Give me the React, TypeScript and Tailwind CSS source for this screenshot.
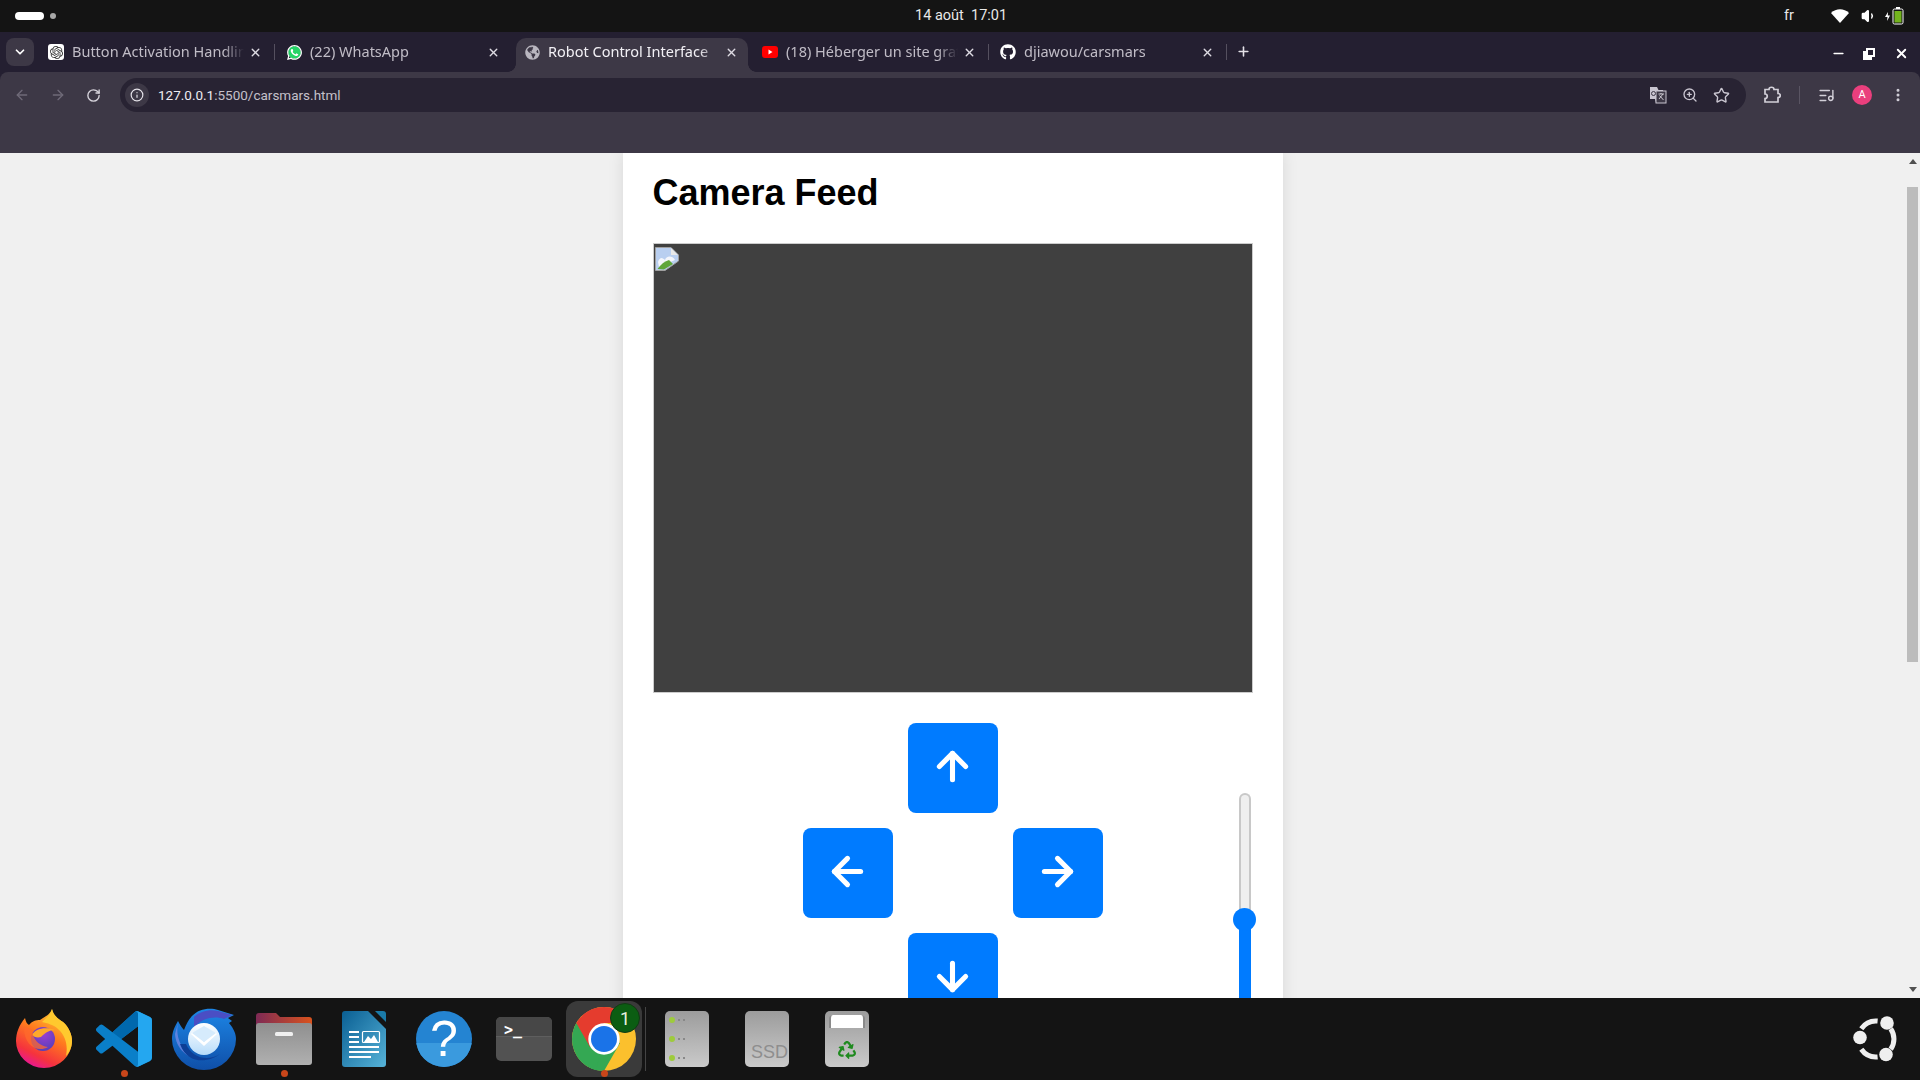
import { ReactNode } from "react";
import {
  ArrowDown, ArrowLeft, ArrowRight, ArrowUp, ChevronDown, EllipsisVertical, Info, ListMusic,
  Minus, Plus, RotateCw, Star, Volume1, X, ZoomIn,
} from "lucide-react";
import { FaGithub, FaGlobeAmericas, FaRecycle, FaWhatsapp } from "react-icons/fa";
import { SiOpenai } from "react-icons/si";

function Tab({ title, icon, active, sep }: { title: string; icon: ReactNode; active?: boolean; sep?: boolean }) {
  return (
    <div className={`relative flex h-[34px] w-[238px] shrink-0 items-start pl-[11px] pt-[6px] ${active ? "text-[#f2f0f5]" : "text-[#c0bcc6]"}`}>
      {active && (
        <>
          <div className="absolute inset-y-0 left-[3px] right-[3px] rounded-t-[10px] bg-[#3d3846]" />
          <div className="absolute bottom-0 left-[-5px] h-2 w-2 bg-[radial-gradient(circle_at_0_0,#241f31_7.5px,#3d3846_8px)]" />
          <div className="absolute bottom-0 right-[-5px] h-2 w-2 bg-[radial-gradient(circle_at_100%_0,#241f31_7.5px,#3d3846_8px)]" />
        </>
      )}
      {sep && <div className="absolute right-0 top-[6px] h-4 w-px bg-[#55505f]" />}
      <div className="relative flex h-4 w-4 shrink-0 items-center justify-center">{icon}</div>
      <span className="relative ml-[8px] mt-[-3px] w-[172px] overflow-hidden whitespace-nowrap font-['Noto_Sans',sans-serif] text-[14.5px] leading-5 [mask-image:linear-gradient(to_right,black_88%,transparent)]">
        {title}
      </span>
      <X className="absolute right-[13px] top-[8px] text-[#dedbe3]" size={13} strokeWidth={2.6} />
    </div>
  );
}

function Firefox() {
  return (
    <svg viewBox="0 0 56 60" className="h-[60px] w-14 -translate-y-px">
      <defs>
        <linearGradient id="ffBody" x1="0.8" y1="0" x2="0.3" y2="1">
          <stop offset="0" stopColor="#ffd43a" />
          <stop offset="0.45" stopColor="#ff7a1e" />
          <stop offset="0.8" stopColor="#f5333d" />
          <stop offset="1" stopColor="#e8159a" />
        </linearGradient>
        <radialGradient id="ffCore" cx="0.55" cy="0.3" r="0.8">
          <stop offset="0" stopColor="#9a3fd0" />
          <stop offset="1" stopColor="#4c3fb5" />
        </radialGradient>
      </defs>
      <path d="M36 1C37 7 42 11 47 14C53 19 56 27 56 33A28 27 0 0 1 0 33C0 25 3 17 9 10C10 14 11 16 13 17C16 13 20 12 24 12C28 9 34 7 36 1Z" fill="url(#ffBody)" />
      <path d="M36 1C37 7 42 11 47 14C53 19 56 27 56 33C56 38 54 44 50 48C52 38 50 28 42 21C38 17 31 15 26 14C30 10 35 7 36 1Z" fill="#ffc92e" />
      <circle cx="27" cy="31" r="12" fill="url(#ffCore)" />
      <path d="M16 27C19 21 29 18 39 22C33 22 29 25 25 29C21 30 18 29 16 27Z" fill="#ffa82a" />
      <path d="M8 20C14 19 17 22 17 27C19 33 24 38 32 39C22 45 8 38 8 20Z" fill="#ff6a2c" opacity="0.75" />
    </svg>
  );
}

function VsCode() {
  return (
    <svg viewBox="0 0 100 100" className="h-14 w-14">
      <path d="M75 72.7 45.2 50 75 27.3ZM96.4 10.8 75.8.9a6.2 6.2 0 0 0-7.1 1.2L29.4 38 12.2 25a4.2 4.2 0 0 0-5.3.2L1.4 30.2a4.2 4.2 0 0 0 0 6.2L16.3 50 1.4 63.6a4.2 4.2 0 0 0 0 6.2l5.5 5a4.2 4.2 0 0 0 5.3.2l17.2-13 39.3 35.9a6.2 6.2 0 0 0 7.1 1.2l20.6-9.9a6.2 6.2 0 0 0 3.5-5.6V16.4a6.2 6.2 0 0 0-3.5-5.6Z" fill="#0a7fc9" fillRule="evenodd" />
      <path d="M68.7 2.1 29.4 38 45.2 50 75 27.3V3C75 1 71 0 68.7 2.1Z" fill="#0068ad" />
      <path d="M71 .3 75.8.9l20.6 9.9a6.2 6.2 0 0 1 3.5 5.6v67.2a6.2 6.2 0 0 1-3.5 5.6L75.8 99.1 71 99.7C74 99 75 97 75 95V5C75 3 74 1 71 .3Z" fill="#24a7f0" />
    </svg>
  );
}

function Thunderbird() {
  return (
    <svg viewBox="0 0 64 62" className="h-[62px] w-16">
      <defs>
        <linearGradient id="tbBody" x1="0.5" y1="0" x2="0.5" y2="1">
          <stop offset="0" stopColor="#1d86e6" />
          <stop offset="1" stopColor="#0f4fa8" />
        </linearGradient>
        <linearGradient id="tbBall" x1="0.5" y1="0" x2="0.5" y2="1">
          <stop offset="0" stopColor="#ffffff" />
          <stop offset="1" stopColor="#b7dcfa" />
        </linearGradient>
      </defs>
      <path d="M20 8C26 1 38-1 46 2L62 7 56 10 60 13 57 15C62 21 64 26 64 31A32 31 0 0 1 0 31C0 24 3 18 6 13 8 17 10 20 12 22 14 17 16 12 20 8Z" fill="url(#tbBody)" />
      <path d="M22 9C28 3 38 1 46 3L60 7 52 11C44 8 30 9 22 20Z" fill="#4a4ec4" />
      <path d="M6 15C3 30 10 46 28 50 18 52 4 42 3 26Z" fill="#7c8ce8" opacity="0.7" />
      <circle cx="32" cy="31" r="16" fill="url(#tbBall)" />
      <path d="M20 25 32 36 44 25" fill="none" stroke="#ffffff" strokeWidth="3" />
      <path d="M20 25 32 34 44 25 32 18Z" fill="#d6ebfc" />
      <path d="M14 36C20 50 36 54 48 46 38 54 16 58 8 36Z" fill="#0d3f96" />
    </svg>
  );
}

function FilesIcon() {
  return (
    <svg viewBox="0 0 56 52" className="h-[52px] w-14">
      <defs>
        <linearGradient id="fBack" x1="0" y1="0" x2="1" y2="0">
          <stop offset="0" stopColor="#7e2a55" />
          <stop offset="1" stopColor="#d9531e" />
        </linearGradient>
        <linearGradient id="fFront" x1="0" y1="0" x2="0" y2="1">
          <stop offset="0" stopColor="#8f8f8f" />
          <stop offset="1" stopColor="#b0b0b0" />
        </linearGradient>
      </defs>
      <path d="M3 0H20L24 4H53A3 3 0 0 1 56 7V20H0V3A3 3 0 0 1 3 0Z" fill="url(#fBack)" />
      <rect y="10" width="56" height="42" rx="3" fill="url(#fFront)" />
      <rect x="19" y="19" width="18" height="4" rx="1.5" fill="#f0f0f0" />
    </svg>
  );
}

function Writer() {
  return (
    <svg viewBox="0 0 44 56" className="h-14 w-11">
      <defs>
        <linearGradient id="wBody" x1="0" y1="0" x2="1" y2="1">
          <stop offset="0" stopColor="#0a5f93" />
          <stop offset="1" stopColor="#56b3d8" />
        </linearGradient>
      </defs>
      <path d="M3 0H26L44 18V53A3 3 0 0 1 41 56H3A3 3 0 0 1 0 53V3A3 3 0 0 1 3 0Z" fill="url(#wBody)" />
      <path d="M33 0H41A3 3 0 0 1 44 3V11Z" fill="#1a7aa8" />
      <path d="M7 21H17M7 26H17M7 31H17M7 36H37M7 41H37M7 46H29" stroke="#fff" strokeWidth="2" />
      <rect x="20.500" y="20.500" width="17" height="11" rx="1" fill="none" stroke="#fff" strokeWidth="1.2" />
      <path d="M22 31 26 25 29 28 32 24 36 31Z" fill="#fff" />
    </svg>
  );
}

function HelpIcon() {
  return (
    <div className="relative flex h-14 w-14 items-center justify-center overflow-hidden rounded-full bg-[#2484d2]">
      <div className="absolute inset-x-0 bottom-0 h-[24px] bg-[#3a9ade]" />
      <span className="relative font-['Liberation_Sans',sans-serif] text-[50px] leading-none text-white">?</span>
    </div>
  );
}

function TerminalIcon() {
  return (
    <div className="relative h-[44px] w-14 overflow-hidden rounded-[5px] bg-[#525252]">
      <div className="h-[20px] border-b border-[#5e5e5e] bg-[#474747]" />
      <span className="absolute left-[8px] top-[3px] font-['DejaVu_Sans_Mono',monospace] text-[15px] font-bold leading-5 text-white">&gt;_</span>
    </div>
  );
}

function ChromeIcon() {
  return (
    <svg viewBox="0 0 64 64" className="h-16 w-16">
      <circle cx="32" cy="32" r="32" fill="#fbc02d" />
      <path d="M32 32 4.300 48A32 32 0 0 0 32 64L48 36Z" fill="#34a853" />
      <path d="M4.300 16A32 32 0 0 0 4.300 48 32 32 0 0 0 24 62.900L32 32Z" fill="#34a853" />
      <path d="M4.300 16A32 32 0 0 1 59.700 16H32L18 40Z" fill="#e53c2e" />
      <circle cx="32" cy="32" r="15.700" fill="#fff" />
      <circle cx="32" cy="32" r="13" fill="#1a73e8" />
    </svg>
  );
}

function Drive({ children }: { children?: ReactNode }) {
  return (
    <div className="relative h-14 w-11 overflow-hidden rounded-[5px] bg-[linear-gradient(#9c9c9c,#cacaca)]">{children}</div>
  );
}

function DockSlot({ children, dot }: { children: ReactNode; dot?: boolean }) {
  return (
    <div className="relative flex h-full w-20 shrink-0 items-center justify-center">
      {children}
      {dot && <div className="absolute bottom-[3px] left-[37px] h-[7px] w-[7px] rounded-full bg-[#c9461a]" />}
    </div>
  );
}

export default function App() {
  return (
    <div className="flex h-screen w-screen flex-col overflow-hidden bg-[#f0f0f0] font-[Roboto,sans-serif]">
      {/* barre GNOME */}
      <div className="relative flex h-8 shrink-0 items-center bg-[#141414] text-[#e8e8e8]">
        <div className="ml-[15px] h-2 w-[29px] rounded-full bg-white" />
        <div className="ml-[6px] h-[6px] w-[6px] rounded-full bg-[#a8a8a8]" />
        <span className="absolute left-[915px] text-[14.500px] leading-5">14 août&nbsp; 17:01</span>
        <span className="ml-auto text-[14.500px]">fr</span>
        <svg viewBox="0 0 18 14" className="ml-[37px] h-[14px] w-[18px]">
          <path d="M0 4C5-1 13-1 18 4L9 14Z" fill="#fff" />
        </svg>
        <Volume1 className="ml-[12px] fill-white text-white" size={16} />
        <svg viewBox="0 0 20 20" className="ml-[8px] mr-[15px] h-5 w-5">
          <path d="M3 6 0 11H2.500L2 15 5 9.500H2.800Z" fill="#fff" />
          <rect x="8" y="3" width="10" height="15" rx="1.500" fill="none" stroke="#fff" />
          <rect x="11" y="1" width="4" height="2" fill="#fff" />
          <rect x="9.500" y="5" width="7" height="11.500" fill="#73b31d" />
        </svg>
      </div>

      {/* chrome */}
      <div className="shrink-0 bg-[#241f31]">
        <div className="flex h-10 items-end">
          <div className="mb-[6px] ml-[6px] flex h-7 w-7 shrink-0 items-center justify-center rounded-lg bg-[#3d3846]">
            <ChevronDown className="text-white" size={14} strokeWidth={3} />
          </div>
          <div className="ml-[3px] flex">
            <Tab title="Button Activation Handling" sep
              icon={<div className="flex h-4 w-4 items-center justify-center rounded-[3px] bg-white"><SiOpenai className="text-[#333]" size={13} /></div>} />
            <Tab title="(22) WhatsApp"
              icon={<div className="relative h-[17px] w-[17px]"><div className="absolute inset-[2px] rounded-full bg-[#25d366]" /><FaWhatsapp className="relative text-white" size={17} /></div>} />
            <Tab title="Robot Control Interface" active icon={<FaGlobeAmericas className="text-[#b9b6bf]" size={15} />} />
            <Tab title="(18) Héberger un site gratuitement" sep
              icon={<svg viewBox="0 0 16 12" className="h-3 w-4"><rect width="16" height="12" rx="3" fill="#f00" /><path d="M6.500 3.500 10.500 6 6.500 8.500Z" fill="#fff" /></svg>} />
            <Tab title="djiawou/carsmars" sep icon={<FaGithub className="text-white" size={16} />} />
          </div>
          <Plus className="mb-[13px] ml-[9px] text-[#e4e1e8]" size={15} strokeWidth={2.5} />
          <div className="mb-[11px] ml-auto flex items-center text-white">
            <Minus className="mr-[17px]" size={15} strokeWidth={2.5} />
            <svg viewBox="0 0 12 12" className="mr-[19px] h-3 w-3">
              <path d="M3 0H12V9H9V12H0V3H3ZM5 2V7H10V2Z" fill="#fff" fillRule="evenodd" />
            </svg>
            <X className="mr-[11px]" size={15} strokeWidth={3} />
          </div>
        </div>

        <div className="flex h-[81px] items-start rounded-t-lg bg-[#3d3846] pt-[6px]">
          <div className="flex h-[34px] w-[120px] shrink-0 items-center">
            <ArrowLeft className="ml-[14px] text-[#6f6a78]" size={16} />
            <ArrowRight className="ml-[20px] text-[#6f6a78]" size={16} />
            <RotateCw className="ml-[20px] text-[#d6d3db]" size={15} strokeWidth={2.2} />
          </div>
          <div className="flex h-[34px] w-[1626px] shrink-0 items-center rounded-full bg-[#282333] pl-[5px]">
            <div className="flex h-6 w-6 items-center justify-center rounded-full bg-[#3d3846]">
              <Info className="text-[#e6e3ea]" size={14} />
            </div>
            <span className="ml-[9px] text-[13.500px] text-[#c4c0ca]"><span className="text-[#eeecf1]">127.0.0.1</span>:5500/carsmars.html</span>
            <svg viewBox="0 0 18 18" className="ml-auto h-[18px] w-[18px]">
              <path d="M1 1H8L9.500 4H14V17H7L6 13H1Z" fill="#c9c5d0" />
              <rect x="7" y="5" width="10" height="12" fill="#3d3846" stroke="#c9c5d0" />
              <path d="M9.500 8H15M12 7V8M10 13 14 8M10.500 9.500 14.500 14" stroke="#d8d5dd" strokeWidth="0.9" />
              <circle cx="4.500" cy="7.500" r="2" fill="none" stroke="#3d3846" />
            </svg>
            <ZoomIn className="ml-[15px] text-[#c9c5d0]" size={16} />
            <Star className="ml-[15px] mr-[16px] text-[#c9c5d0]" size={17} />
          </div>
          <div className="flex h-[34px] flex-1 items-center">
            <svg viewBox="0 0 18 18" className="ml-[17px] h-[18px] w-[18px]">
              <path d="M6 3.500C6 .5 11 .5 11 3.500H15V7.500C18 7.500 18 11.500 15 11.500V16H2V12.500C5 12.500 5 8 2 8V3.500Z" fill="none" stroke="#d2cfd8" strokeWidth="1.700" />
            </svg>
            <div className="ml-[18px] h-[18px] w-px bg-[#5a5563]" />
            <ListMusic className="ml-[18px] text-[#d2cfd8]" size={17} />
            <div className="ml-[17px] flex h-5 w-5 items-center justify-center rounded-full bg-[#ea3f7d] text-[11px] text-white">A</div>
            <EllipsisVertical className="ml-[18px] text-[#d2cfd8]" size={16} strokeWidth={2.5} />
          </div>
        </div>
      </div>

      {/* page */}
      <div className="flex min-h-0 flex-1 overflow-hidden">
        <div className="flex flex-1 justify-center">
          <div className="h-[1100px] w-[660px] shrink-0 bg-white px-[30px] pt-[19px] shadow-[0_0_15px_rgba(0,0,0,0.1)]">
            <h1 className="font-['Liberation_Sans',sans-serif] text-4xl leading-[41px] font-bold text-black">Camera Feed</h1>
            <div className="mt-[30px] h-[450px] w-[600px] border border-[#ccc] bg-[#404040] pl-px pt-[3px]">
              <svg viewBox="0 0 24 24" className="h-6 w-6">
                <path d="M.5.500H16L23.500 8V14L10 23.500H.5Z" fill="#b9cff0" stroke="#a0a0a0" />
                <path d="M3 15C5 9 8 11 10 13 11 9 17 8 20 13L4 20Z" fill="#f4f6fb" />
                <path d="M2.500 22C6 17 10 14 14 13L18 17 9 22.500Z" fill="#5fa63a" />
                <path d="M16 1V8H23Z" fill="#e8e8e8" />
              </svg>
            </div>
            <div className="mt-[30px] grid grid-cols-[1fr_auto_1fr]">
              <div />
              <div className="grid grid-cols-[90px_90px_90px] grid-rows-[90px_90px_90px] gap-[15px]">
                <button className="col-start-2 flex items-center justify-center rounded-lg bg-[#007bff] pb-1 text-white">
                  <ArrowUp size={45} strokeWidth={2.700} />
                </button>
                <button className="col-start-1 row-start-2 flex items-center justify-center rounded-lg bg-[#007bff] pb-1 text-white">
                  <ArrowLeft size={45} strokeWidth={2.700} />
                </button>
                <button className="col-start-3 row-start-2 flex items-center justify-center rounded-lg bg-[#007bff] pb-1 text-white">
                  <ArrowRight size={45} strokeWidth={2.700} />
                </button>
                <button className="col-start-2 row-start-3 flex items-center justify-center rounded-lg bg-[#007bff] pb-1 text-white">
                  <ArrowDown size={45} strokeWidth={2.700} />
                </button>
              </div>
              {/* slider vertical */}
              <div className="flex justify-end pr-[2px] pt-[70px]">
                <div className="relative w-3">
                  <div className="h-[130px] rounded-t-full border-2 border-b-0 border-[#c8c8c8] bg-[#efefef]" />
                  <div className="h-[100px] bg-[#007bff]" />
                  <div className="absolute left-[-6px] top-[114.500px] h-[23px] w-[23px] rounded-full bg-[#007bff]" />
                </div>
              </div>
            </div>
          </div>
        </div>
        <div className="flex w-[15px] shrink-0 flex-col items-center bg-[#f0f0f0]">
          <div className="mt-[6px] h-0 w-0 border-x-[4px] border-b-[5px] border-x-transparent border-b-[#505050]" />
          <div className="mt-[23px] h-[475px] w-[11px] bg-[#bcbcbc]" />
          <div className="mt-auto mb-[6px] h-0 w-0 border-x-[4px] border-t-[5px] border-x-transparent border-t-[#505050]" />
        </div>
      </div>

      {/* dock */}
      <div className="flex h-[82px] shrink-0 items-center bg-[#141414] pl-1">
        <DockSlot><Firefox /></DockSlot>
        <DockSlot dot><VsCode /></DockSlot>
        <DockSlot><Thunderbird /></DockSlot>
        <DockSlot dot><FilesIcon /></DockSlot>
        <DockSlot><Writer /></DockSlot>
        <DockSlot><HelpIcon /></DockSlot>
        <DockSlot><TerminalIcon /></DockSlot>
        <DockSlot dot>
          <div className="absolute left-[2px] top-[3px] h-[76px] w-[76px] rounded-xl bg-[#3a3a3a]" />
          <div className="relative"><ChromeIcon /></div>
          <div className="absolute left-[46px] top-[5px] flex h-[30px] w-[30px] items-center justify-center rounded-full border border-[#123a14] bg-[#0b5d12] text-[18px] text-[#e8f0e0]">1</div>
        </DockSlot>
        <div className="mx-px h-16 w-px shrink-0 bg-[#444]" />
        <DockSlot>
          <Drive>
            <div className="flex h-full flex-col justify-between px-[4px] py-[6px]">
              {[0, 1, 2].map((i) => (
                <div key={i} className="flex items-center gap-[3px]">
                  <div className="h-[6px] w-[6px] rounded-full bg-[#9ecb3c]" />
                  <div className="h-[2px] w-[2px] bg-[#888]" />
                  <div className="h-[2px] w-[2px] bg-[#888]" />
                </div>
              ))}
            </div>
          </Drive>
        </DockSlot>
        <DockSlot>
          <Drive>
            <span className="absolute left-[6px] top-[29px] font-['Liberation_Sans',sans-serif] text-[18px] leading-6 text-[#8e8e8e]">SSD</span>
          </Drive>
        </DockSlot>
        <DockSlot>
          <Drive>
            <div className="mx-auto mt-1 h-[13px] w-9 rounded-t-sm border-x-2 border-[#8a8a8a] bg-white" />
            <FaRecycle className="absolute left-[13px] top-[30px] text-[#1f8a1f]" size={18} />
          </Drive>
        </DockSlot>
        <div className="ml-auto mr-[21px]">
          <svg viewBox="0 0 46 46" className="h-[46px] w-[46px]">
            <g fill="none" stroke="#efefef" strokeWidth="5">
              <path d="M8.300 12.700A18 18 0 0 1 24.600 5.100" />
              <path d="M37.700 12.700A18 18 0 0 1 37.700 33.300" />
              <path d="M24.600 40.900A18 18 0 0 1 8.300 33.300" />
            </g>
            <circle cx="34" cy="7" r="6.800" fill="#efefef" />
            <circle cx="7" cy="21.500" r="6.800" fill="#efefef" />
            <circle cx="33" cy="38.500" r="6.800" fill="#efefef" />
          </svg>
        </div>
      </div>
    </div>
  );
}
